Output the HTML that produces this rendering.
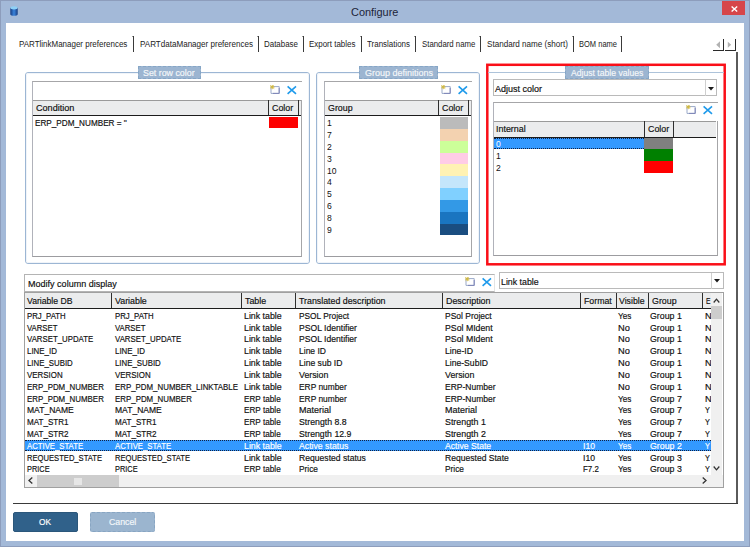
<!DOCTYPE html>
<html lang="en"><head><meta charset="utf-8"><title>Configure</title>
<style>
html,body{margin:0;padding:0;background:#a3b9d8;}
body{width:750px;height:547px;overflow:hidden;position:relative;font-family:"Liberation Sans",sans-serif;}
#win{position:absolute;left:0;top:0;width:750px;height:547px;background:#a3b9d8;overflow:hidden;}
#win div,.abs,.t{position:absolute;}
.t{-webkit-text-stroke:0.18px currentColor;white-space:nowrap;transform-origin:0 50%;display:block;font-family:"Liberation Sans",sans-serif;}
</style></head>
<body>
<div id="win">
<span class="t" style="left:351.3px;top:4.0px;font-size:11.8px;line-height:16px;color:#1c2438;-webkit-text-stroke:0;transform:scaleX(0.927);">Configure</span>
<svg class="abs" style="left:9.5px;top:6px" width="8" height="10" viewBox="0 0 8 10"><defs><linearGradient id="cy" x1="0" x2="1" y1="0" y2="0"><stop offset="0" stop-color="#183c80"/><stop offset="0.5" stop-color="#3a84dc"/><stop offset="1" stop-color="#183c80"/></linearGradient></defs><path d="M0.3 1.8 V8.2 C0.3 10.2 7.7 10.2 7.7 8.2 V1.8 Z" fill="url(#cy)"/><ellipse cx="4" cy="1.8" rx="3.7" ry="1.6" fill="#8fd0f6"/></svg>
<div style="left:722px;top:1px;width:23px;height:14px;background:#d6464a"></div>
<svg class="abs" style="left:730.5px;top:5.5px" width="7" height="6" viewBox="0 0 7 6"><path d="M0.6 0.5 L6.2 5.5 M6.2 0.5 L0.6 5.5" stroke="#fff" stroke-width="1.4"/></svg>
<div style="left:0px;top:0px;width:750px;height:1px;background:#8d9dbc"></div>
<div style="left:0px;top:0px;width:1px;height:547px;background:#8d9dbc"></div>
<div style="left:749px;top:0px;width:1px;height:547px;background:#8d9dbc"></div>
<div style="left:0px;top:546px;width:750px;height:1px;background:#8d9dbc"></div>
<div style="left:6px;top:23px;width:738px;height:518px;background:#fff"></div>
<span class="t" style="left:19.3px;top:37.7px;font-size:8.9px;line-height:12px;color:#222;-webkit-text-stroke:0;transform:scaleX(0.899);">PARTlinkManager preferences</span>
<div style="left:133.4px;top:36px;width:1.1px;height:15.5px;background:#3a3a3a"></div>
<div style="left:132.4px;top:36px;width:1px;height:1px;background:#999"></div>
<span class="t" style="left:139.6px;top:37.7px;font-size:8.9px;line-height:12px;color:#222;-webkit-text-stroke:0;transform:scaleX(0.908);">PARTdataManager preferences</span>
<div style="left:257.6px;top:36px;width:1.1px;height:15.5px;background:#3a3a3a"></div>
<div style="left:256.6px;top:36px;width:1px;height:1px;background:#999"></div>
<span class="t" style="left:264px;top:37.7px;font-size:8.9px;line-height:12px;color:#222;-webkit-text-stroke:0;transform:scaleX(0.895);">Database</span>
<div style="left:303.1px;top:36px;width:1.1px;height:15.5px;background:#3a3a3a"></div>
<div style="left:302.1px;top:36px;width:1px;height:1px;background:#999"></div>
<span class="t" style="left:309.1px;top:37.7px;font-size:8.9px;line-height:12px;color:#222;-webkit-text-stroke:0;transform:scaleX(0.896);">Export tables</span>
<div style="left:360.9px;top:36px;width:1.1px;height:15.5px;background:#3a3a3a"></div>
<div style="left:359.9px;top:36px;width:1px;height:1px;background:#999"></div>
<span class="t" style="left:367px;top:37.7px;font-size:8.9px;line-height:12px;color:#222;-webkit-text-stroke:0;transform:scaleX(0.896);">Translations</span>
<div style="left:414.9px;top:36px;width:1.1px;height:15.5px;background:#3a3a3a"></div>
<div style="left:413.9px;top:36px;width:1px;height:1px;background:#999"></div>
<span class="t" style="left:421.8px;top:37.7px;font-size:8.9px;line-height:12px;color:#222;-webkit-text-stroke:0;transform:scaleX(0.880);">Standard name</span>
<div style="left:480.4px;top:36px;width:1.1px;height:15.5px;background:#3a3a3a"></div>
<div style="left:479.4px;top:36px;width:1px;height:1px;background:#999"></div>
<span class="t" style="left:486.8px;top:37.7px;font-size:8.9px;line-height:12px;color:#222;-webkit-text-stroke:0;transform:scaleX(0.912);">Standard name (short)</span>
<div style="left:572.7px;top:36px;width:1.1px;height:15.5px;background:#3a3a3a"></div>
<div style="left:571.7px;top:36px;width:1px;height:1px;background:#999"></div>
<span class="t" style="left:578.6px;top:37.7px;font-size:8.9px;line-height:12px;color:#222;-webkit-text-stroke:0;transform:scaleX(0.847);">BOM name</span>
<div style="left:621.4px;top:36px;width:1.1px;height:15.5px;background:#3a3a3a"></div>
<div style="left:620.4px;top:36px;width:1px;height:1px;background:#999"></div>
<div style="left:713px;top:49.5px;width:11px;height:1.2px;background:#2a2a2a"></div>
<div style="left:723px;top:39px;width:1px;height:11.7px;background:#2a2a2a"></div>
<div style="left:725px;top:49.5px;width:11px;height:1.2px;background:#2a2a2a"></div>
<div style="left:735px;top:39px;width:1px;height:11.7px;background:#2a2a2a"></div>
<svg class="abs" style="left:715px;top:41px" width="20" height="8" viewBox="0 0 20 8"><path d="M5 0.2 V7.2 L1.2 3.7 Z M12.8 0.7 V6.7 L16.2 3.7 Z" fill="#b2b2b2"/></svg>
<div style="left:736.2px;top:52px;width:1.5px;height:452px;background:#5a5a5a"></div>
<div style="left:13px;top:503px;width:724.7px;height:1.3px;background:#3a3a3a"></div>
<div style="left:25px;top:72px;width:285px;height:192px;border:1px solid #9cb6d4;border-radius:3px;box-sizing:border-box"></div>
<div style="left:26px;top:73px;width:283px;height:190px;border:1px solid #f0f4f9;border-radius:2px;box-sizing:border-box"></div>
<div style="left:137.5px;top:66px;width:63px;height:13px;background:#9cb5d1;border:1px dashed #86a6c6;box-sizing:border-box"></div>
<span class="t" style="left:142.5px;top:66.75px;font-size:9.4px;line-height:12px;color:#f4f7f9;transform:scaleX(0.943);">Set row color</span>
<div style="left:316px;top:72px;width:164px;height:192px;border:1px solid #9cb6d4;border-radius:3px;box-sizing:border-box"></div>
<div style="left:317px;top:73px;width:162px;height:190px;border:1px solid #f0f4f9;border-radius:2px;box-sizing:border-box"></div>
<div style="left:359px;top:66px;width:79px;height:13px;background:#9cb5d1;border:1px dashed #86a6c6;box-sizing:border-box"></div>
<span class="t" style="left:365px;top:66.75px;font-size:9.4px;line-height:12px;color:#f4f7f9;transform:scaleX(0.960);">Group definitions</span>
<svg class="abs" style="left:484px;top:61px" width="244" height="207" viewBox="484 61 244 207"><rect x="487.3" y="64.8" width="237.4" height="199.5" fill="none" stroke="#fa0f18" stroke-width="2.5"/></svg>
<div style="left:488px;top:71.5px;width:236px;height:1px;background:#adc3da"></div>
<div style="left:565px;top:66px;width:84px;height:13px;background:#9cb5d1;border:1px dashed #86a6c6;box-sizing:border-box"></div>
<span class="t" style="left:571.3px;top:67.05px;font-size:9.4px;line-height:12px;color:#f4f7f9;transform:scaleX(0.919);">Adjust table values</span>
<div style="left:32px;top:81px;width:270px;height:175.5px;border:1px solid #a6a6a8;border-left-color:#b0b2ba;border-bottom-color:#9c9ca0;box-sizing:border-box"></div>
<svg class="abs" style="left:270px;top:85px" width="11" height="10" viewBox="0 0 11 10"><path d="M1 1.6 H9.2 V8.4 H1 Z" fill="#fff" stroke="#9aa9c9" stroke-width="1"/><path d="M9.2 3 V8.4 H3" fill="none" stroke="#7f86b8" stroke-width="1"/><path d="M0.3 0.4 L4.2 3.6 M2.3 0 V4.2 M0 2 H4.6 M4 0.4 L0.6 3.6" stroke="#d2b93c" stroke-width="0.9"/></svg>
<svg class="abs" style="left:287px;top:85px" width="10" height="10" viewBox="0 0 10 10"><path d="M0.6 1.3 L9 8.8 M9 1.3 L0.6 8.8" stroke="#1e9aeb" stroke-width="1.6" fill="none"/></svg>
<div style="left:300.5px;top:82px;width:2px;height:18px;background:#fff"></div>
<div style="left:33px;top:100px;width:268px;height:15.3px;background:#ebeced;"></div>
<div style="left:33px;top:100px;width:268px;height:0.7px;background:#9a9a9a"></div>
<div style="left:33px;top:115.3px;width:268px;height:1.1px;background:#1c1c1c"></div>
<span class="t" style="left:36.4px;top:102.0px;font-size:9.4px;line-height:12px;color:#111;transform:scaleX(0.970);">Condition</span>
<div style="left:268px;top:100px;width:1.1px;height:15.3px;background:#2e2e2e"></div>
<span class="t" style="left:272px;top:102.0px;font-size:9.4px;line-height:12px;color:#111;transform:scaleX(0.943);">Color</span>
<div style="left:297.5px;top:100px;width:1.1px;height:15.3px;background:#2e2e2e"></div>
<span class="t" style="left:35px;top:117.05px;font-size:9.4px;line-height:12px;color:#111;transform:scaleX(0.872);">ERP_PDM_NUMBER = &#x27;&#x27;</span>
<div style="left:269px;top:117px;width:29px;height:11px;background:#fd0000"></div>
<div style="left:324px;top:81px;width:148px;height:175.5px;border:1px solid #a6a6a8;border-left-color:#b0b2ba;border-bottom-color:#9c9ca0;box-sizing:border-box"></div>
<svg class="abs" style="left:440.5px;top:85px" width="11" height="10" viewBox="0 0 11 10"><path d="M1 1.6 H9.2 V8.4 H1 Z" fill="#fff" stroke="#9aa9c9" stroke-width="1"/><path d="M9.2 3 V8.4 H3" fill="none" stroke="#7f86b8" stroke-width="1"/><path d="M0.3 0.4 L4.2 3.6 M2.3 0 V4.2 M0 2 H4.6 M4 0.4 L0.6 3.6" stroke="#d2b93c" stroke-width="0.9"/></svg>
<svg class="abs" style="left:457.5px;top:85px" width="10" height="10" viewBox="0 0 10 10"><path d="M0.6 1.3 L9 8.8 M9 1.3 L0.6 8.8" stroke="#1e9aeb" stroke-width="1.6" fill="none"/></svg>
<div style="left:470.5px;top:82px;width:2px;height:18px;background:#fff"></div>
<div style="left:325px;top:100px;width:146px;height:15.3px;background:#ebeced;"></div>
<div style="left:325px;top:100px;width:146px;height:0.7px;background:#9a9a9a"></div>
<div style="left:325px;top:115.3px;width:146px;height:1.1px;background:#1c1c1c"></div>
<span class="t" style="left:328px;top:102.0px;font-size:9.4px;line-height:12px;color:#111;transform:scaleX(0.944);">Group</span>
<div style="left:438px;top:100px;width:1.1px;height:15.3px;background:#2e2e2e"></div>
<span class="t" style="left:442px;top:102.0px;font-size:9.4px;line-height:12px;color:#111;transform:scaleX(0.943);">Color</span>
<div style="left:467.5px;top:100px;width:1.1px;height:15.3px;background:#2e2e2e"></div>
<span class="t" style="left:327px;top:117.45px;font-size:9.4px;line-height:12px;color:#111;-webkit-text-stroke:0;transform:scaleX(0.916);">1</span>
<div style="left:439.5px;top:117.2px;width:28.5px;height:11.9px;background:#bbbbbb"></div>
<span class="t" style="left:327px;top:129.25px;font-size:9.4px;line-height:12px;color:#111;-webkit-text-stroke:0;transform:scaleX(0.916);">7</span>
<div style="left:439.5px;top:129.0px;width:28.5px;height:11.9px;background:#f3d2b0"></div>
<span class="t" style="left:327px;top:141.05px;font-size:9.4px;line-height:12px;color:#111;-webkit-text-stroke:0;transform:scaleX(0.916);">2</span>
<div style="left:439.5px;top:140.8px;width:28.5px;height:11.9px;background:#ccff99"></div>
<span class="t" style="left:327px;top:152.85px;font-size:9.4px;line-height:12px;color:#111;-webkit-text-stroke:0;transform:scaleX(0.916);">3</span>
<div style="left:439.5px;top:152.6px;width:28.5px;height:11.9px;background:#ffcce6"></div>
<span class="t" style="left:327px;top:164.65px;font-size:9.4px;line-height:12px;color:#111;-webkit-text-stroke:0;transform:scaleX(0.916);">10</span>
<div style="left:439.5px;top:164.4px;width:28.5px;height:11.9px;background:#fff2b3"></div>
<span class="t" style="left:327px;top:176.45px;font-size:9.4px;line-height:12px;color:#111;-webkit-text-stroke:0;transform:scaleX(0.916);">4</span>
<div style="left:439.5px;top:176.2px;width:28.5px;height:11.9px;background:#c4e6fb"></div>
<span class="t" style="left:327px;top:188.35px;font-size:9.4px;line-height:12px;color:#111;-webkit-text-stroke:0;transform:scaleX(0.916);">5</span>
<div style="left:439.5px;top:188.1px;width:28.5px;height:11.9px;background:#80d0ff"></div>
<span class="t" style="left:327px;top:200.15px;font-size:9.4px;line-height:12px;color:#111;-webkit-text-stroke:0;transform:scaleX(0.916);">6</span>
<div style="left:439.5px;top:199.9px;width:28.5px;height:11.9px;background:#3399e6"></div>
<span class="t" style="left:327px;top:211.95px;font-size:9.4px;line-height:12px;color:#111;-webkit-text-stroke:0;transform:scaleX(0.916);">8</span>
<div style="left:439.5px;top:211.7px;width:28.5px;height:11.9px;background:#1a75c0"></div>
<span class="t" style="left:327px;top:223.75px;font-size:9.4px;line-height:12px;color:#111;-webkit-text-stroke:0;transform:scaleX(0.916);">9</span>
<div style="left:439.5px;top:223.5px;width:28.5px;height:11.9px;background:#1a4d80"></div>
<div style="left:492.5px;top:79.3px;width:224.7px;height:17.2px;border:1px solid #bababa;box-sizing:border-box"></div>
<span class="t" style="left:495.2px;top:82.55px;font-size:9.4px;line-height:12px;color:#111;transform:scaleX(0.960);">Adjust color</span>
<div style="left:705.2px;top:80px;width:1px;height:15.5px;background:#cfcfcf"></div>
<svg class="abs" style="left:708.2px;top:86.6px" width="6" height="4" viewBox="0 0 6 4"><path d="M0 0 H6 L3 3.6 Z" fill="#1a1a1a"/></svg>
<div style="left:493px;top:102px;width:224.5px;height:153.5px;border:1px solid #a6a6a8;border-left-color:#b0b2ba;border-bottom-color:#9c9ca0;box-sizing:border-box"></div>
<svg class="abs" style="left:686px;top:105.4px" width="11" height="10" viewBox="0 0 11 10"><path d="M1 1.6 H9.2 V8.4 H1 Z" fill="#fff" stroke="#9aa9c9" stroke-width="1"/><path d="M9.2 3 V8.4 H3" fill="none" stroke="#7f86b8" stroke-width="1"/><path d="M0.3 0.4 L4.2 3.6 M2.3 0 V4.2 M0 2 H4.6 M4 0.4 L0.6 3.6" stroke="#d2b93c" stroke-width="0.9"/></svg>
<svg class="abs" style="left:703px;top:105.4px" width="10" height="10" viewBox="0 0 10 10"><path d="M0.6 1.3 L9 8.8 M9 1.3 L0.6 8.8" stroke="#1e9aeb" stroke-width="1.6" fill="none"/></svg>
<div style="left:716px;top:103px;width:2px;height:18px;background:#fff"></div>
<div style="left:494px;top:121px;width:222px;height:15.5px;background:#ebeced;"></div>
<div style="left:494px;top:121px;width:222px;height:0.7px;background:#9a9a9a"></div>
<div style="left:494px;top:136.5px;width:222px;height:1.1px;background:#1c1c1c"></div>
<span class="t" style="left:495.8px;top:123.1px;font-size:9.4px;line-height:12px;color:#111;transform:scaleX(0.951);">Internal</span>
<div style="left:643.5px;top:121px;width:1.1px;height:15.5px;background:#2e2e2e"></div>
<span class="t" style="left:648px;top:123.1px;font-size:9.4px;line-height:12px;color:#111;transform:scaleX(0.943);">Color</span>
<div style="left:672.5px;top:121px;width:1.1px;height:15.5px;background:#2e2e2e"></div>
<div style="left:494px;top:138px;width:150px;height:11.4px;background:#3399ff;border-top:1px dotted #124;border-bottom:1px dotted #124;box-sizing:border-box"></div>
<span class="t" style="left:496px;top:138.15px;font-size:9.4px;line-height:12px;color:#fff;-webkit-text-stroke:0;transform:scaleX(0.916);">0</span>
<span class="t" style="left:496px;top:149.85px;font-size:9.4px;line-height:12px;color:#111;-webkit-text-stroke:0;transform:scaleX(0.916);">1</span>
<span class="t" style="left:496px;top:161.55px;font-size:9.4px;line-height:12px;color:#111;-webkit-text-stroke:0;transform:scaleX(0.916);">2</span>
<div style="left:644px;top:138px;width:29px;height:11.4px;background:#808080"></div>
<div style="left:644px;top:149.3px;width:29px;height:11.8px;background:#008000"></div>
<div style="left:644px;top:161px;width:29px;height:11.9px;background:#ff0000"></div>
<div style="left:24px;top:274px;width:471px;height:18px;border:1px solid #b4b4b4;border-right-color:#e4e4e4;box-sizing:border-box"></div>
<span class="t" style="left:28px;top:278.05px;font-size:9.4px;line-height:12px;color:#111;transform:scaleX(0.963);">Modify column display</span>
<svg class="abs" style="left:465px;top:277px" width="11" height="10" viewBox="0 0 11 10"><path d="M1 1.6 H9.2 V8.4 H1 Z" fill="#fff" stroke="#9aa9c9" stroke-width="1"/><path d="M9.2 3 V8.4 H3" fill="none" stroke="#7f86b8" stroke-width="1"/><path d="M0.3 0.4 L4.2 3.6 M2.3 0 V4.2 M0 2 H4.6 M4 0.4 L0.6 3.6" stroke="#d2b93c" stroke-width="0.9"/></svg>
<svg class="abs" style="left:482px;top:277px" width="10" height="10" viewBox="0 0 10 10"><path d="M0.6 1.3 L9 8.8 M9 1.3 L0.6 8.8" stroke="#1e9aeb" stroke-width="1.6" fill="none"/></svg>
<div style="left:498.5px;top:272px;width:225px;height:17.3px;border:1px solid #bababa;box-sizing:border-box"></div>
<span class="t" style="left:501px;top:275.55px;font-size:9.4px;line-height:12px;color:#111;transform:scaleX(0.939);">Link table</span>
<div style="left:711px;top:273px;width:1px;height:15.5px;background:#cfcfcf"></div>
<svg class="abs" style="left:714.2px;top:279.4px" width="6" height="4" viewBox="0 0 6 4"><path d="M0 0 H6 L3 3.6 Z" fill="#1a1a1a"/></svg>
<div style="left:24px;top:292px;width:700px;height:196px;border:1px solid #a0a0a0;box-sizing:border-box"></div>
<div style="left:25px;top:293px;width:686px;height:15px;background:#ebeced;"></div>
<div style="left:25px;top:308px;width:686px;height:1.1px;background:#1c1c1c"></div>
<span class="t" style="left:27px;top:294.85px;font-size:9.4px;line-height:12px;color:#111;transform:scaleX(0.923);">Variable DB</span>
<div style="left:111px;top:293px;width:1.1px;height:15px;background:#2e2e2e"></div>
<span class="t" style="left:115px;top:294.85px;font-size:9.4px;line-height:12px;color:#111;transform:scaleX(0.943);">Variable</span>
<div style="left:241px;top:293px;width:1.1px;height:15px;background:#2e2e2e"></div>
<span class="t" style="left:245px;top:294.85px;font-size:9.4px;line-height:12px;color:#111;transform:scaleX(0.944);">Table</span>
<div style="left:295px;top:293px;width:1.1px;height:15px;background:#2e2e2e"></div>
<span class="t" style="left:299px;top:294.85px;font-size:9.4px;line-height:12px;color:#111;transform:scaleX(0.941);">Translated description</span>
<div style="left:442px;top:293px;width:1.1px;height:15px;background:#2e2e2e"></div>
<span class="t" style="left:446px;top:294.85px;font-size:9.4px;line-height:12px;color:#111;transform:scaleX(0.949);">Description</span>
<div style="left:580px;top:293px;width:1.1px;height:15px;background:#2e2e2e"></div>
<span class="t" style="left:584px;top:294.85px;font-size:9.4px;line-height:12px;color:#111;transform:scaleX(0.934);">Format</span>
<div style="left:616px;top:293px;width:1.1px;height:15px;background:#2e2e2e"></div>
<span class="t" style="left:619px;top:294.85px;font-size:9.4px;line-height:12px;color:#111;transform:scaleX(0.932);">Visible</span>
<div style="left:648px;top:293px;width:1.1px;height:15px;background:#2e2e2e"></div>
<span class="t" style="left:652px;top:294.85px;font-size:9.4px;line-height:12px;color:#111;transform:scaleX(0.944);">Group</span>
<div style="left:702px;top:293px;width:1.1px;height:15px;background:#2e2e2e"></div>
<span class="t" style="left:706px;top:294.85px;font-size:9.4px;line-height:12px;color:#111;transform:scaleX(0.716);">E</span>
<span class="t" style="left:26.8px;top:309.85px;font-size:9.4px;line-height:12px;color:#111;transform:scaleX(0.833);">PRJ_PATH</span>
<span class="t" style="left:115.2px;top:309.85px;font-size:9.4px;line-height:12px;color:#111;transform:scaleX(0.833);">PRJ_PATH</span>
<span class="t" style="left:244px;top:309.85px;font-size:9.4px;line-height:12px;color:#111;transform:scaleX(0.939);">Link table</span>
<span class="t" style="left:299px;top:309.85px;font-size:9.4px;line-height:12px;color:#111;transform:scaleX(0.888);">PSOL Project</span>
<span class="t" style="left:445.2px;top:309.85px;font-size:9.4px;line-height:12px;color:#111;transform:scaleX(0.903);">PSol Project</span>
<span class="t" style="left:618.4px;top:309.85px;font-size:9.4px;line-height:12px;color:#111;transform:scaleX(0.870);">Yes</span>
<span class="t" style="left:650.2px;top:309.85px;font-size:9.4px;line-height:12px;color:#111;transform:scaleX(0.939);">Group 1</span>
<span class="t" style="left:704.8px;top:309.85px;font-size:9.4px;line-height:12px;color:#111;transform:scaleX(0.978);">N</span>
<span class="t" style="left:26.8px;top:321.66px;font-size:9.4px;line-height:12px;color:#111;transform:scaleX(0.826);">VARSET</span>
<span class="t" style="left:115.2px;top:321.66px;font-size:9.4px;line-height:12px;color:#111;transform:scaleX(0.826);">VARSET</span>
<span class="t" style="left:244px;top:321.66px;font-size:9.4px;line-height:12px;color:#111;transform:scaleX(0.939);">Link table</span>
<span class="t" style="left:299px;top:321.66px;font-size:9.4px;line-height:12px;color:#111;transform:scaleX(0.917);">PSOL Identifier</span>
<span class="t" style="left:445.2px;top:321.66px;font-size:9.4px;line-height:12px;color:#111;transform:scaleX(0.933);">PSol MIdent</span>
<span class="t" style="left:618.4px;top:321.66px;font-size:9.4px;line-height:12px;color:#111;transform:scaleX(0.987);">No</span>
<span class="t" style="left:650.2px;top:321.66px;font-size:9.4px;line-height:12px;color:#111;transform:scaleX(0.939);">Group 1</span>
<span class="t" style="left:704.8px;top:321.66px;font-size:9.4px;line-height:12px;color:#111;transform:scaleX(0.978);">N</span>
<span class="t" style="left:26.8px;top:333.47px;font-size:9.4px;line-height:12px;color:#111;transform:scaleX(0.834);">VARSET_UPDATE</span>
<span class="t" style="left:115.2px;top:333.47px;font-size:9.4px;line-height:12px;color:#111;transform:scaleX(0.834);">VARSET_UPDATE</span>
<span class="t" style="left:244px;top:333.47px;font-size:9.4px;line-height:12px;color:#111;transform:scaleX(0.939);">Link table</span>
<span class="t" style="left:299px;top:333.47px;font-size:9.4px;line-height:12px;color:#111;transform:scaleX(0.917);">PSOL Identifier</span>
<span class="t" style="left:445.2px;top:333.47px;font-size:9.4px;line-height:12px;color:#111;transform:scaleX(0.933);">PSol MIdent</span>
<span class="t" style="left:618.4px;top:333.47px;font-size:9.4px;line-height:12px;color:#111;transform:scaleX(0.987);">No</span>
<span class="t" style="left:650.2px;top:333.47px;font-size:9.4px;line-height:12px;color:#111;transform:scaleX(0.939);">Group 1</span>
<span class="t" style="left:704.8px;top:333.47px;font-size:9.4px;line-height:12px;color:#111;transform:scaleX(0.978);">N</span>
<span class="t" style="left:26.8px;top:345.28px;font-size:9.4px;line-height:12px;color:#111;transform:scaleX(0.844);">LINE_ID</span>
<span class="t" style="left:115.2px;top:345.28px;font-size:9.4px;line-height:12px;color:#111;transform:scaleX(0.844);">LINE_ID</span>
<span class="t" style="left:244px;top:345.28px;font-size:9.4px;line-height:12px;color:#111;transform:scaleX(0.939);">Link table</span>
<span class="t" style="left:299px;top:345.28px;font-size:9.4px;line-height:12px;color:#111;transform:scaleX(0.908);">Line ID</span>
<span class="t" style="left:445.2px;top:345.28px;font-size:9.4px;line-height:12px;color:#111;transform:scaleX(0.929);">Line-ID</span>
<span class="t" style="left:618.4px;top:345.28px;font-size:9.4px;line-height:12px;color:#111;transform:scaleX(0.987);">No</span>
<span class="t" style="left:650.2px;top:345.28px;font-size:9.4px;line-height:12px;color:#111;transform:scaleX(0.939);">Group 1</span>
<span class="t" style="left:704.8px;top:345.28px;font-size:9.4px;line-height:12px;color:#111;transform:scaleX(0.978);">N</span>
<span class="t" style="left:26.8px;top:357.09px;font-size:9.4px;line-height:12px;color:#111;transform:scaleX(0.837);">LINE_SUBID</span>
<span class="t" style="left:115.2px;top:357.09px;font-size:9.4px;line-height:12px;color:#111;transform:scaleX(0.837);">LINE_SUBID</span>
<span class="t" style="left:244px;top:357.09px;font-size:9.4px;line-height:12px;color:#111;transform:scaleX(0.939);">Link table</span>
<span class="t" style="left:299px;top:357.09px;font-size:9.4px;line-height:12px;color:#111;transform:scaleX(0.915);">Line sub ID</span>
<span class="t" style="left:445.2px;top:357.09px;font-size:9.4px;line-height:12px;color:#111;transform:scaleX(0.917);">Line-SubID</span>
<span class="t" style="left:618.4px;top:357.09px;font-size:9.4px;line-height:12px;color:#111;transform:scaleX(0.987);">No</span>
<span class="t" style="left:650.2px;top:357.09px;font-size:9.4px;line-height:12px;color:#111;transform:scaleX(0.939);">Group 1</span>
<span class="t" style="left:704.8px;top:357.09px;font-size:9.4px;line-height:12px;color:#111;transform:scaleX(0.978);">N</span>
<span class="t" style="left:26.8px;top:368.9px;font-size:9.4px;line-height:12px;color:#111;transform:scaleX(0.846);">VERSION</span>
<span class="t" style="left:115.2px;top:368.9px;font-size:9.4px;line-height:12px;color:#111;transform:scaleX(0.846);">VERSION</span>
<span class="t" style="left:244px;top:368.9px;font-size:9.4px;line-height:12px;color:#111;transform:scaleX(0.939);">Link table</span>
<span class="t" style="left:299px;top:368.9px;font-size:9.4px;line-height:12px;color:#111;transform:scaleX(0.939);">Version</span>
<span class="t" style="left:445.2px;top:368.9px;font-size:9.4px;line-height:12px;color:#111;transform:scaleX(0.939);">Version</span>
<span class="t" style="left:618.4px;top:368.9px;font-size:9.4px;line-height:12px;color:#111;transform:scaleX(0.987);">No</span>
<span class="t" style="left:650.2px;top:368.9px;font-size:9.4px;line-height:12px;color:#111;transform:scaleX(0.939);">Group 1</span>
<span class="t" style="left:704.8px;top:368.9px;font-size:9.4px;line-height:12px;color:#111;transform:scaleX(0.978);">N</span>
<span class="t" style="left:26.8px;top:380.71px;font-size:9.4px;line-height:12px;color:#111;transform:scaleX(0.843);">ERP_PDM_NUMBER</span>
<span class="t" style="left:115.2px;top:380.71px;font-size:9.4px;line-height:12px;color:#111;transform:scaleX(0.841);">ERP_PDM_NUMBER_LINKTABLE</span>
<span class="t" style="left:244px;top:380.71px;font-size:9.4px;line-height:12px;color:#111;transform:scaleX(0.939);">Link table</span>
<span class="t" style="left:299px;top:380.71px;font-size:9.4px;line-height:12px;color:#111;transform:scaleX(0.893);">ERP number</span>
<span class="t" style="left:445.2px;top:380.71px;font-size:9.4px;line-height:12px;color:#111;transform:scaleX(0.906);">ERP-Number</span>
<span class="t" style="left:618.4px;top:380.71px;font-size:9.4px;line-height:12px;color:#111;transform:scaleX(0.987);">No</span>
<span class="t" style="left:650.2px;top:380.71px;font-size:9.4px;line-height:12px;color:#111;transform:scaleX(0.939);">Group 1</span>
<span class="t" style="left:704.8px;top:380.71px;font-size:9.4px;line-height:12px;color:#111;transform:scaleX(0.978);">N</span>
<span class="t" style="left:26.8px;top:392.52px;font-size:9.4px;line-height:12px;color:#111;transform:scaleX(0.843);">ERP_PDM_NUMBER</span>
<span class="t" style="left:115.2px;top:392.52px;font-size:9.4px;line-height:12px;color:#111;transform:scaleX(0.843);">ERP_PDM_NUMBER</span>
<span class="t" style="left:244px;top:392.52px;font-size:9.4px;line-height:12px;color:#111;transform:scaleX(0.873);">ERP table</span>
<span class="t" style="left:299px;top:392.52px;font-size:9.4px;line-height:12px;color:#111;transform:scaleX(0.893);">ERP number</span>
<span class="t" style="left:445.2px;top:392.52px;font-size:9.4px;line-height:12px;color:#111;transform:scaleX(0.906);">ERP-Number</span>
<span class="t" style="left:618.4px;top:392.52px;font-size:9.4px;line-height:12px;color:#111;transform:scaleX(0.870);">Yes</span>
<span class="t" style="left:650.2px;top:392.52px;font-size:9.4px;line-height:12px;color:#111;transform:scaleX(0.939);">Group 7</span>
<span class="t" style="left:704.8px;top:392.52px;font-size:9.4px;line-height:12px;color:#111;transform:scaleX(0.978);">N</span>
<span class="t" style="left:26.8px;top:404.33px;font-size:9.4px;line-height:12px;color:#111;transform:scaleX(0.911);">MAT_NAME</span>
<span class="t" style="left:115.2px;top:404.33px;font-size:9.4px;line-height:12px;color:#111;transform:scaleX(0.911);">MAT_NAME</span>
<span class="t" style="left:244px;top:404.33px;font-size:9.4px;line-height:12px;color:#111;transform:scaleX(0.873);">ERP table</span>
<span class="t" style="left:299px;top:404.33px;font-size:9.4px;line-height:12px;color:#111;transform:scaleX(0.960);">Material</span>
<span class="t" style="left:445.2px;top:404.33px;font-size:9.4px;line-height:12px;color:#111;transform:scaleX(0.960);">Material</span>
<span class="t" style="left:618.4px;top:404.33px;font-size:9.4px;line-height:12px;color:#111;transform:scaleX(0.870);">Yes</span>
<span class="t" style="left:650.2px;top:404.33px;font-size:9.4px;line-height:12px;color:#111;transform:scaleX(0.939);">Group 7</span>
<span class="t" style="left:704.8px;top:404.33px;font-size:9.4px;line-height:12px;color:#111;transform:scaleX(0.782);">Y</span>
<span class="t" style="left:26.8px;top:416.14px;font-size:9.4px;line-height:12px;color:#111;transform:scaleX(0.859);">MAT_STR1</span>
<span class="t" style="left:115.2px;top:416.14px;font-size:9.4px;line-height:12px;color:#111;transform:scaleX(0.859);">MAT_STR1</span>
<span class="t" style="left:244px;top:416.14px;font-size:9.4px;line-height:12px;color:#111;transform:scaleX(0.873);">ERP table</span>
<span class="t" style="left:299px;top:416.14px;font-size:9.4px;line-height:12px;color:#111;transform:scaleX(0.932);">Strength 8.8</span>
<span class="t" style="left:445.2px;top:416.14px;font-size:9.4px;line-height:12px;color:#111;transform:scaleX(0.945);">Strength 1</span>
<span class="t" style="left:618.4px;top:416.14px;font-size:9.4px;line-height:12px;color:#111;transform:scaleX(0.870);">Yes</span>
<span class="t" style="left:650.2px;top:416.14px;font-size:9.4px;line-height:12px;color:#111;transform:scaleX(0.939);">Group 7</span>
<span class="t" style="left:704.8px;top:416.14px;font-size:9.4px;line-height:12px;color:#111;transform:scaleX(0.782);">Y</span>
<span class="t" style="left:26.8px;top:427.95px;font-size:9.4px;line-height:12px;color:#111;transform:scaleX(0.859);">MAT_STR2</span>
<span class="t" style="left:115.2px;top:427.95px;font-size:9.4px;line-height:12px;color:#111;transform:scaleX(0.859);">MAT_STR2</span>
<span class="t" style="left:244px;top:427.95px;font-size:9.4px;line-height:12px;color:#111;transform:scaleX(0.873);">ERP table</span>
<span class="t" style="left:299px;top:427.95px;font-size:9.4px;line-height:12px;color:#111;transform:scaleX(0.930);">Strength 12.9</span>
<span class="t" style="left:445.2px;top:427.95px;font-size:9.4px;line-height:12px;color:#111;transform:scaleX(0.945);">Strength 2</span>
<span class="t" style="left:618.4px;top:427.95px;font-size:9.4px;line-height:12px;color:#111;transform:scaleX(0.870);">Yes</span>
<span class="t" style="left:650.2px;top:427.95px;font-size:9.4px;line-height:12px;color:#111;transform:scaleX(0.939);">Group 7</span>
<span class="t" style="left:704.8px;top:427.95px;font-size:9.4px;line-height:12px;color:#111;transform:scaleX(0.782);">Y</span>
<div style="left:25px;top:439.6px;width:686px;height:11.6px;background:#3399ff;border-top:1px dotted #124;border-bottom:1px dotted #124;box-sizing:border-box"></div>
<span class="t" style="left:26.8px;top:439.76px;font-size:9.4px;line-height:12px;color:#fff;transform:scaleX(0.826);">ACTIVE_STATE</span>
<span class="t" style="left:115.2px;top:439.76px;font-size:9.4px;line-height:12px;color:#fff;transform:scaleX(0.826);">ACTIVE_STATE</span>
<span class="t" style="left:244px;top:439.76px;font-size:9.4px;line-height:12px;color:#fff;transform:scaleX(0.939);">Link table</span>
<span class="t" style="left:299px;top:439.76px;font-size:9.4px;line-height:12px;color:#fff;transform:scaleX(0.928);">Active status</span>
<span class="t" style="left:445.2px;top:439.76px;font-size:9.4px;line-height:12px;color:#fff;transform:scaleX(0.923);">Active State</span>
<span class="t" style="left:582.5px;top:439.76px;font-size:9.4px;line-height:12px;color:#fff;transform:scaleX(0.914);">I10</span>
<span class="t" style="left:618.4px;top:439.76px;font-size:9.4px;line-height:12px;color:#fff;transform:scaleX(0.870);">Yes</span>
<span class="t" style="left:650.2px;top:439.76px;font-size:9.4px;line-height:12px;color:#fff;transform:scaleX(0.939);">Group 2</span>
<span class="t" style="left:704.8px;top:439.76px;font-size:9.4px;line-height:12px;color:#fff;transform:scaleX(0.782);">Y</span>
<span class="t" style="left:26.8px;top:451.57px;font-size:9.4px;line-height:12px;color:#111;transform:scaleX(0.812);">REQUESTED_STATE</span>
<span class="t" style="left:115.2px;top:451.57px;font-size:9.4px;line-height:12px;color:#111;transform:scaleX(0.812);">REQUESTED_STATE</span>
<span class="t" style="left:244px;top:451.57px;font-size:9.4px;line-height:12px;color:#111;transform:scaleX(0.939);">Link table</span>
<span class="t" style="left:299px;top:451.57px;font-size:9.4px;line-height:12px;color:#111;transform:scaleX(0.917);">Requested status</span>
<span class="t" style="left:445.2px;top:451.57px;font-size:9.4px;line-height:12px;color:#111;transform:scaleX(0.913);">Requested State</span>
<span class="t" style="left:582.5px;top:451.57px;font-size:9.4px;line-height:12px;color:#111;transform:scaleX(0.914);">I10</span>
<span class="t" style="left:618.4px;top:451.57px;font-size:9.4px;line-height:12px;color:#111;transform:scaleX(0.870);">Yes</span>
<span class="t" style="left:650.2px;top:451.57px;font-size:9.4px;line-height:12px;color:#111;transform:scaleX(0.939);">Group 3</span>
<span class="t" style="left:704.8px;top:451.57px;font-size:9.4px;line-height:12px;color:#111;transform:scaleX(0.782);">Y</span>
<span class="t" style="left:26.8px;top:463.38px;font-size:9.4px;line-height:12px;color:#111;transform:scaleX(0.789);">PRICE</span>
<span class="t" style="left:115.2px;top:463.38px;font-size:9.4px;line-height:12px;color:#111;transform:scaleX(0.789);">PRICE</span>
<span class="t" style="left:244px;top:463.38px;font-size:9.4px;line-height:12px;color:#111;transform:scaleX(0.873);">ERP table</span>
<span class="t" style="left:299px;top:463.38px;font-size:9.4px;line-height:12px;color:#111;transform:scaleX(0.887);">Price</span>
<span class="t" style="left:445.2px;top:463.38px;font-size:9.4px;line-height:12px;color:#111;transform:scaleX(0.887);">Price</span>
<span class="t" style="left:582.5px;top:463.38px;font-size:9.4px;line-height:12px;color:#111;transform:scaleX(0.843);">F7.2</span>
<span class="t" style="left:618.4px;top:463.38px;font-size:9.4px;line-height:12px;color:#111;transform:scaleX(0.870);">Yes</span>
<span class="t" style="left:650.2px;top:463.38px;font-size:9.4px;line-height:12px;color:#111;transform:scaleX(0.939);">Group 3</span>
<span class="t" style="left:704.8px;top:463.38px;font-size:9.4px;line-height:12px;color:#111;transform:scaleX(0.782);">Y</span>
<div style="left:710.6px;top:293px;width:11.8px;height:182px;background:#f0f0f0"></div>
<div style="left:710.9px;top:306.2px;width:11.2px;height:12.6px;background:#cdcdcd"></div>
<svg class="abs" style="left:713.3px;top:297.6px" width="7" height="5" viewBox="0 0 7 5"><path d="M0.7 4.5 L3.5 1.2 L6.3 4.5" stroke="#333" stroke-width="1.3" fill="none"/></svg>
<svg class="abs" style="left:713.3px;top:465.5px" width="7" height="5" viewBox="0 0 7 5"><path d="M0.7 0.5 L3.5 3.8 L6.3 0.5" stroke="#333" stroke-width="1.3" fill="none"/></svg>
<div style="left:25px;top:475px;width:697.5px;height:12px;background:#f0f0f0"></div>
<div style="left:37.2px;top:475.2px;width:81.6px;height:11.4px;background:#cdcdcd"></div>
<div style="left:74px;top:477.5px;width:8px;height:7px;background:#e6e6e6"></div>
<svg class="abs" style="left:28.3px;top:477.3px" width="5" height="7" viewBox="0 0 5 7"><path d="M4.3 0.6 L1 3.5 L4.3 6.4" stroke="#333" stroke-width="1.3" fill="none"/></svg>
<svg class="abs" style="left:701.5px;top:477.3px" width="5" height="7" viewBox="0 0 5 7"><path d="M0.7 0.6 L4 3.5 L0.7 6.4" stroke="#333" stroke-width="1.3" fill="none"/></svg>
<div style="left:12.5px;top:511.8px;width:65px;height:20.2px;background:#30618a;border:1px solid #2b577b;border-radius:2px;box-sizing:border-box"></div>
<span class="t" style="left:39.2px;top:516.35px;font-size:9.6px;line-height:12px;color:#fff;transform:scaleX(0.865);">OK</span>
<div style="left:90.3px;top:511.8px;width:64.8px;height:20.2px;background:#9bb5cf;border:1px dashed #88a5c2;border-radius:2px;box-sizing:border-box"></div>
<span class="t" style="left:109.3px;top:516.35px;font-size:9.6px;line-height:12px;color:#f4f7fa;transform:scaleX(0.914);">Cancel</span>
</div>
</body></html>
